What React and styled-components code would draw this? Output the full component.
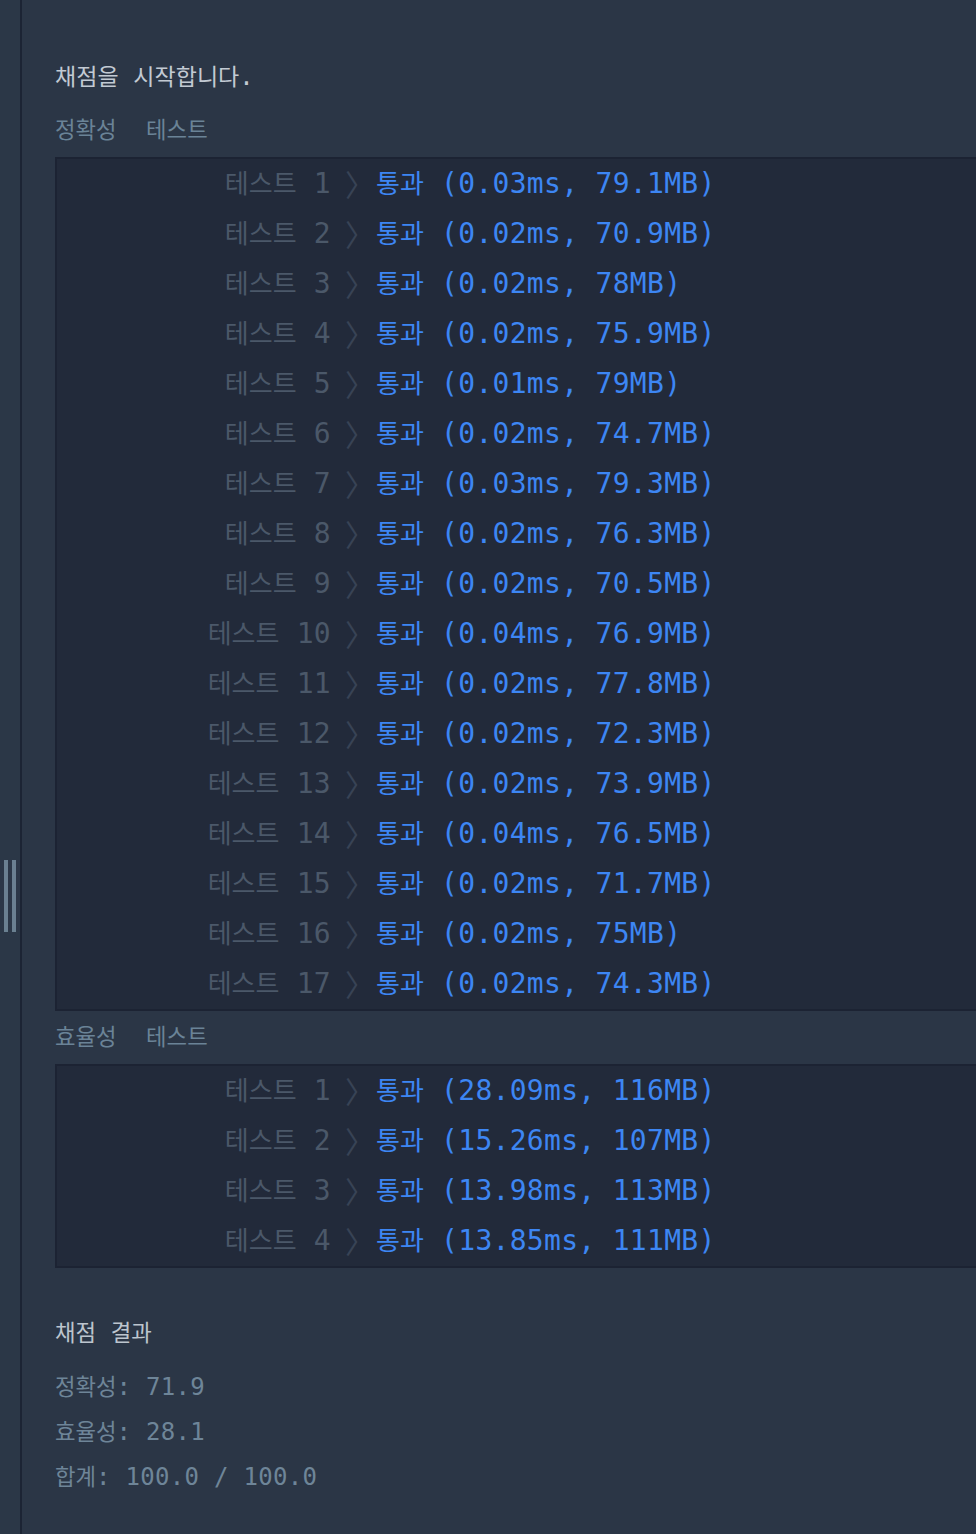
import React from "react";
import styled, { createGlobalStyle } from "styled-components";

const GlobalStyle = createGlobalStyle`
  html, body {
    margin: 0;
    padding: 0;
    background: #2b3646;
    overflow: hidden;
  }
`;

const accuracy = [
  ["0.03ms", "79.1MB"],
  ["0.02ms", "70.9MB"],
  ["0.02ms", "78MB"],
  ["0.02ms", "75.9MB"],
  ["0.01ms", "79MB"],
  ["0.02ms", "74.7MB"],
  ["0.03ms", "79.3MB"],
  ["0.02ms", "76.3MB"],
  ["0.02ms", "70.5MB"],
  ["0.04ms", "76.9MB"],
  ["0.02ms", "77.8MB"],
  ["0.02ms", "72.3MB"],
  ["0.02ms", "73.9MB"],
  ["0.04ms", "76.5MB"],
  ["0.02ms", "71.7MB"],
  ["0.02ms", "75MB"],
  ["0.02ms", "74.3MB"],
];

const efficiency = [
  ["28.09ms", "116MB"],
  ["15.26ms", "107MB"],
  ["13.98ms", "113MB"],
  ["13.85ms", "111MB"],
];

const Page = styled.div`
  display: flex;
  min-height: 100vh;
  font-family: "DejaVu Sans Mono", "Noto Sans CJK KR", monospace;
`;

const Gutter = styled.div`
  width: 22px;
  flex-shrink: 0;
  background: #2b3747;
  border-right: 2px solid #1c2434;
  padding: 860px 0 0 4px;
  box-sizing: border-box;
  display: flex;
  gap: 4px;
  align-items: flex-start;
`;

const Grip = styled.div`
  width: 4px;
  height: 72px;
  background: #6a8091;
`;

const Console = styled.div`
  flex: 1;
  padding: 51px 0 0 33px;
  min-width: 0;
`;

const Ko = styled.span`
  font-family: "Noto Sans CJK KR", sans-serif;
  font-size: ${(p) => p.$scale || 0.93}em;
  letter-spacing: 0;
  line-height: 1;
`;

const Line = styled.div`
  font-size: 24px;
  letter-spacing: 0.3px;
  line-height: ${(p) => p.$h || 45}px;
  color: ${(p) => p.$color || "#6e8598"};
  white-space: pre;
`;

const Title = styled(Line)`
  margin-top: 43px;
  margin-bottom: 9px;
`;

const Group = styled.div`
  background: #222a3a;
  border: 2px solid #1c2333;
  border-right: none;
`;

const Row = styled.div`
  display: flex;
  height: 50px;
  line-height: 50px;
  font-size: 28px;
  letter-spacing: 0.3px;
  white-space: pre;
`;

const LabelCell = styled.div`
  width: 274px;
  text-align: right;
  color: #4b5869;
`;

const Chevron = styled.div`
  width: 45px;
  padding-left: 14px;
  box-sizing: border-box;
  color: #384355;
  font-family: "Noto Sans CJK KR", sans-serif;
  font-size: 30px;
  line-height: 48px;
`;

const Result = styled.div`
  color: #3d86f3;
`;

function TestGroup({ items }) {
  return (
    <Group>
      {items.map(([time, mem], i) => (
        <Row key={i}>
          <LabelCell>
            <Ko>테스트</Ko> {i + 1}
          </LabelCell>
          <Chevron>〉</Chevron>
          <Result>
            <Ko>통과</Ko> ({time}, {mem})
          </Result>
        </Row>
      ))}
    </Group>
  );
}

export default function App() {
  return (
    <>
      <GlobalStyle />
      <Page>
        <Gutter>
          <Grip />
          <Grip />
        </Gutter>
        <Console>
          <Line $h={53} $color="#c2cad3">
            <Ko $scale={0.96}>채점을</Ko> <Ko $scale={0.96}>시작합니다</Ko>.
          </Line>
          <Line $h={53} $color="#6a8397">
            <Ko>정확성</Ko>  <Ko>테스트</Ko>
          </Line>
          <TestGroup items={accuracy} />
          <Line $h={53} $color="#6a8397">
            <Ko>효율성</Ko>  <Ko>테스트</Ko>
          </Line>
          <TestGroup items={efficiency} />
          <Title $color="#bcc5ce">
            <Ko>채점</Ko> <Ko>결과</Ko>
          </Title>
          <Line>
            <Ko>정확성</Ko>: 71.9
          </Line>
          <Line>
            <Ko>효율성</Ko>: 28.1
          </Line>
          <Line>
            <Ko>합계</Ko>: 100.0 / 100.0
          </Line>
        </Console>
      </Page>
    </>
  );
}
